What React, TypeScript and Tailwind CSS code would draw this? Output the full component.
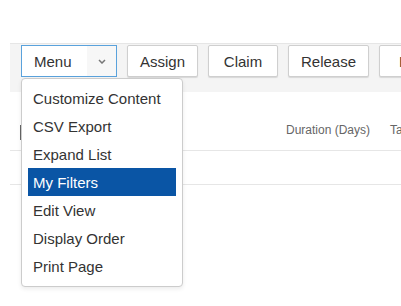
import React from "react";

const items = [
  "Customize Content",
  "CSV Export",
  "Expand List",
  "My Filters",
  "Edit View",
  "Display Order",
  "Print Page",
];

const ToolButton: React.FC<{ label: string; width: string }> = ({ label, width }) => (
  <button
    className={`${width} h-8 shrink-0 bg-white border border-[#cfcfcf] rounded-[2px] shadow-[0_1px_1px_rgba(0,0,0,0.12)] text-[15px] text-[#333] flex items-center justify-center pt-[2px]`}
  >
    {label}
  </button>
);

const App: React.FC = () => {
  return (
    <div
      className="relative w-[401px] h-[306px] overflow-hidden bg-white"
      style={{ fontFamily: '"Liberation Sans", Arial, sans-serif' }}
    >
      <div className="h-[43px]" />
      {/* toolbar */}
      <div className="ml-[10px] h-[49px] bg-[#f4f4f4] border-t border-[#e6e6e6] pl-[11px] pt-[1px] flex gap-[10px]">
        <div className="w-[96px] h-8 shrink-0 border border-[#5aa2dc] bg-white flex items-stretch">
          <span className="flex-1 flex items-center pl-[12px] pt-[2px] text-[15px] text-[#333]">Menu</span>
          <span className="w-[29px] bg-[#f7f7f7] flex items-center justify-center">
            <svg width="8" height="5" viewBox="0 0 8 5">
              <path d="M1 1l3 3 3-3" fill="none" stroke="#777" strokeWidth="1.5" />
            </svg>
          </span>
        </div>
        <ToolButton label="Assign" width="w-[71px]" />
        <ToolButton label="Claim" width="w-[70px]" />
        <ToolButton label="Release" width="w-[81px]" />
        <button className="w-[70px] h-8 shrink-0 bg-white border border-[#cfcfcf] rounded-[2px] shadow-[0_1px_1px_rgba(0,0,0,0.12)] text-[15px] text-[#333] flex items-center justify-start pl-[19px] pt-[2px]">
          Hold
        </button>
      </div>
      {/* table header */}
      <div className="ml-[10px] h-[59px] border-b border-[#e6e6e6] flex items-end pb-[11px] relative">
        <div className="absolute left-[10px] top-[33px] w-[13px] h-[15px] border-l-2 border-[#666]" />
        <div className="ml-[276px] text-[12px] text-[#666] whitespace-nowrap">Duration (Days)</div>
        <div className="ml-[20px] text-[12px] text-[#666] whitespace-nowrap">Task</div>
      </div>
      <div className="ml-[10px] h-[34px] border-b border-[#e6e6e6]" />

      {/* dropdown */}
      <div className="absolute left-[21px] top-[78px] w-[162px] bg-white border border-[#cccccc] rounded-[4px] shadow-[0_2px_4px_rgba(0,0,0,0.08)] pt-[5px] pb-[6px] px-[6px]">
        {items.map((item) => (
          <div
            key={item}
            className={`h-[28px] flex items-center pl-[5px] pt-[3px] text-[15px] whitespace-nowrap ${
              item === "My Filters" ? "bg-[#0a55a5] text-white" : "text-[#333]"
            }`}
          >
            {item}
          </div>
        ))}
      </div>
    </div>
  );
};

export default App;
